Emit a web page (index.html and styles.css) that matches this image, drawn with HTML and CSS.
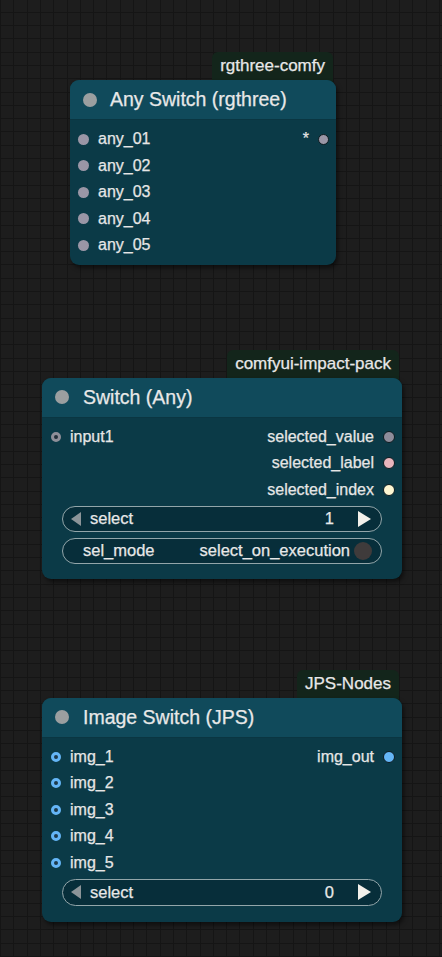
FILE: index.html
```html
<!DOCTYPE html>
<html lang="en">
<head>
  <meta charset="UTF-8">
  <title>Switch nodes</title>
  <link rel="stylesheet" href="styles.css">
</head>
<body>
  <div class="canvas">

    <div class="group group-rgthree">
      <div class="badge">rgthree-comfy</div>
      <div class="node">
        <div class="node-title"><span class="title-dot"></span>Any Switch (rgthree)</div>
        <div class="node-body">
          <div class="row">
            <span class="slot slot-any"></span><span class="label">any_01</span>
            <span class="out-label">*</span><span class="slot slot-any slot-out"></span>
          </div>
          <div class="row"><span class="slot slot-any"></span><span class="label">any_02</span></div>
          <div class="row"><span class="slot slot-any"></span><span class="label">any_03</span></div>
          <div class="row"><span class="slot slot-any"></span><span class="label">any_04</span></div>
          <div class="row"><span class="slot slot-any"></span><span class="label">any_05</span></div>
        </div>
      </div>
    </div>

    <div class="group group-impact">
      <div class="badge">comfyui-impact-pack</div>
      <div class="node node-wide">
        <div class="node-title"><span class="title-dot"></span>Switch (Any)</div>
        <div class="node-body">
          <div class="row">
            <span class="slot slot-ring"></span><span class="label">input1</span>
            <span class="out-label">selected_value</span><span class="slot slot-value slot-out"></span>
          </div>
          <div class="row">
            <span class="out-label">selected_label</span><span class="slot slot-label slot-out"></span>
          </div>
          <div class="row">
            <span class="out-label">selected_index</span><span class="slot slot-index slot-out"></span>
          </div>
          <div class="widget">
            <span class="arrow-left"></span><span class="w-name">select</span>
            <span class="w-value">1</span><span class="arrow-right"></span>
          </div>
          <div class="widget widget-toggle">
            <span class="w-name">sel_mode</span>
            <span class="w-value">select_on_execution</span><span class="toggle"></span>
          </div>
        </div>
      </div>
    </div>

    <div class="group group-jps">
      <div class="badge">JPS-Nodes</div>
      <div class="node node-wide">
        <div class="node-title"><span class="title-dot"></span>Image Switch (JPS)</div>
        <div class="node-body">
          <div class="row">
            <span class="slot slot-image"></span><span class="label">img_1</span>
            <span class="out-label">img_out</span><span class="slot slot-image-out slot-out"></span>
          </div>
          <div class="row"><span class="slot slot-image"></span><span class="label">img_2</span></div>
          <div class="row"><span class="slot slot-image"></span><span class="label">img_3</span></div>
          <div class="row"><span class="slot slot-image"></span><span class="label">img_4</span></div>
          <div class="row"><span class="slot slot-image"></span><span class="label">img_5</span></div>
          <div class="widget widget-last">
            <span class="arrow-left"></span><span class="w-name">select</span>
            <span class="w-value">0</span><span class="arrow-right"></span>
          </div>
        </div>
      </div>
    </div>

  </div>
</body>
</html>
```

FILE: styles.css
```css
html, body {
  margin: 0;
  height: 100%;
}
body {
  font-family: "Liberation Sans", Arial, sans-serif;
  color: #e6e6e6;
  background-color: #1d1d1d;
  background-image:
    repeating-linear-gradient(90deg, #151515 0 1px, transparent 1px 13.3px),
    repeating-linear-gradient(0deg, #151515 0 1px, transparent 1px 13.3px);
  overflow: hidden;
  -webkit-text-stroke: 0.25px currentColor;
}
.canvas {
  display: flex;
  flex-direction: column;
  padding-top: 52px;
}
.group {
  display: flex;
  flex-direction: column;
}
.group-rgthree {
  margin-left: 70px;
  width: 266px;
}
.group-impact {
  margin-left: 42px;
  width: 360px;
  margin-top: 85px;
}
.group-jps {
  margin-left: 42px;
  width: 360px;
  margin-top: 91px;
}
.badge {
  align-self: flex-end;
  margin-right: 3px;
  margin-bottom: -4px;
  height: 32px;
  padding: 0 8px;
  font-size: 17px;
  line-height: 28px;
  color: #e8e8e8;
  background-color: #13251b;
  border-radius: 6px 6px 0 0;
}
.node {
  position: relative;
  background-color: #0b3a47;
  border-radius: 9px;
  box-shadow: 2px 3px 4px rgba(0, 0, 0, 0.5);
  overflow: hidden;
}
.node-title {
  display: flex;
  align-items: center;
  height: 40px;
  padding-left: 13px;
  font-size: 19.5px;
  color: #e8e8e8;
  background-color: #104a5b;
  border-bottom: 1px solid #0a3642;
  box-sizing: border-box;
}
.title-dot {
  width: 14px;
  height: 14px;
  border-radius: 50%;
  background-color: #9b9fa0;
  margin-right: 13px;
}
.node-wide .title-dot {
  margin-right: 14px;
}
.node-body {
  padding: 6px 0 6px;
}
.row {
  display: flex;
  align-items: center;
  height: 26.5px;
  font-size: 16px;
  padding: 0 7px 0 8px;
}
.slot {
  width: 10px;
  height: 10px;
  border-radius: 50%;
  box-sizing: border-box;
  flex-shrink: 0;
}
.label {
  margin-left: 9px;
}
.out-label {
  margin-left: auto;
  margin-right: 9px;
}
.slot-out {
  width: 12px;
  height: 12px;
  border: 1.5px solid #0c1a1f;
}
.slot-any {
  width: 11px;
  height: 11px;
  background-color: #9a96a6;
}
.slot-ring {
  border: 3px solid #8f8f99;
  background-color: #23303a;
  margin-left: 1px;
}
.slot-value {
  background-color: #8e8c9a;
}
.slot-label {
  background-color: #e9b5bd;
}
.slot-index {
  background-color: #fdf6d2;
}
.slot-image {
  border: 3px solid #64b5f6;
  background-color: #1e3a4a;
  margin-left: 1px;
}
.slot-image-out {
  background-color: #64b5f6;
}
.widget {
  display: flex;
  align-items: center;
  height: 26px;
  margin: 2.5px 20px 0;
  padding: 0 10px 0 8px;
  font-size: 16.5px;
  color: #e8e8e8;
  background-color: #072e3a;
  border: 1px solid #93a6aa;
  border-radius: 14px;
  box-sizing: border-box;
}
.widget-toggle {
  margin-top: 6px;
  margin-bottom: 9px;
  padding: 0 9px 0 20px;
}
.widget-last {
  margin-top: 2.5px;
  margin-bottom: 10px;
  height: 27px;
}
.arrow-left {
  width: 0;
  height: 0;
  border-top: 7px solid transparent;
  border-bottom: 7px solid transparent;
  border-right: 10px solid #8c9498;
  margin-right: 9px;
}
.arrow-right {
  width: 0;
  height: 0;
  border-top: 8px solid transparent;
  border-bottom: 8px solid transparent;
  border-left: 13px solid #f2f0ea;
  margin-left: 24px;
  -webkit-text-stroke: 0;
}
.w-value {
  margin-left: auto;
}
.toggle {
  width: 18px;
  height: 18px;
  border-radius: 50%;
  background-color: #3f3b3b;
  margin-left: 4px;
}
```
